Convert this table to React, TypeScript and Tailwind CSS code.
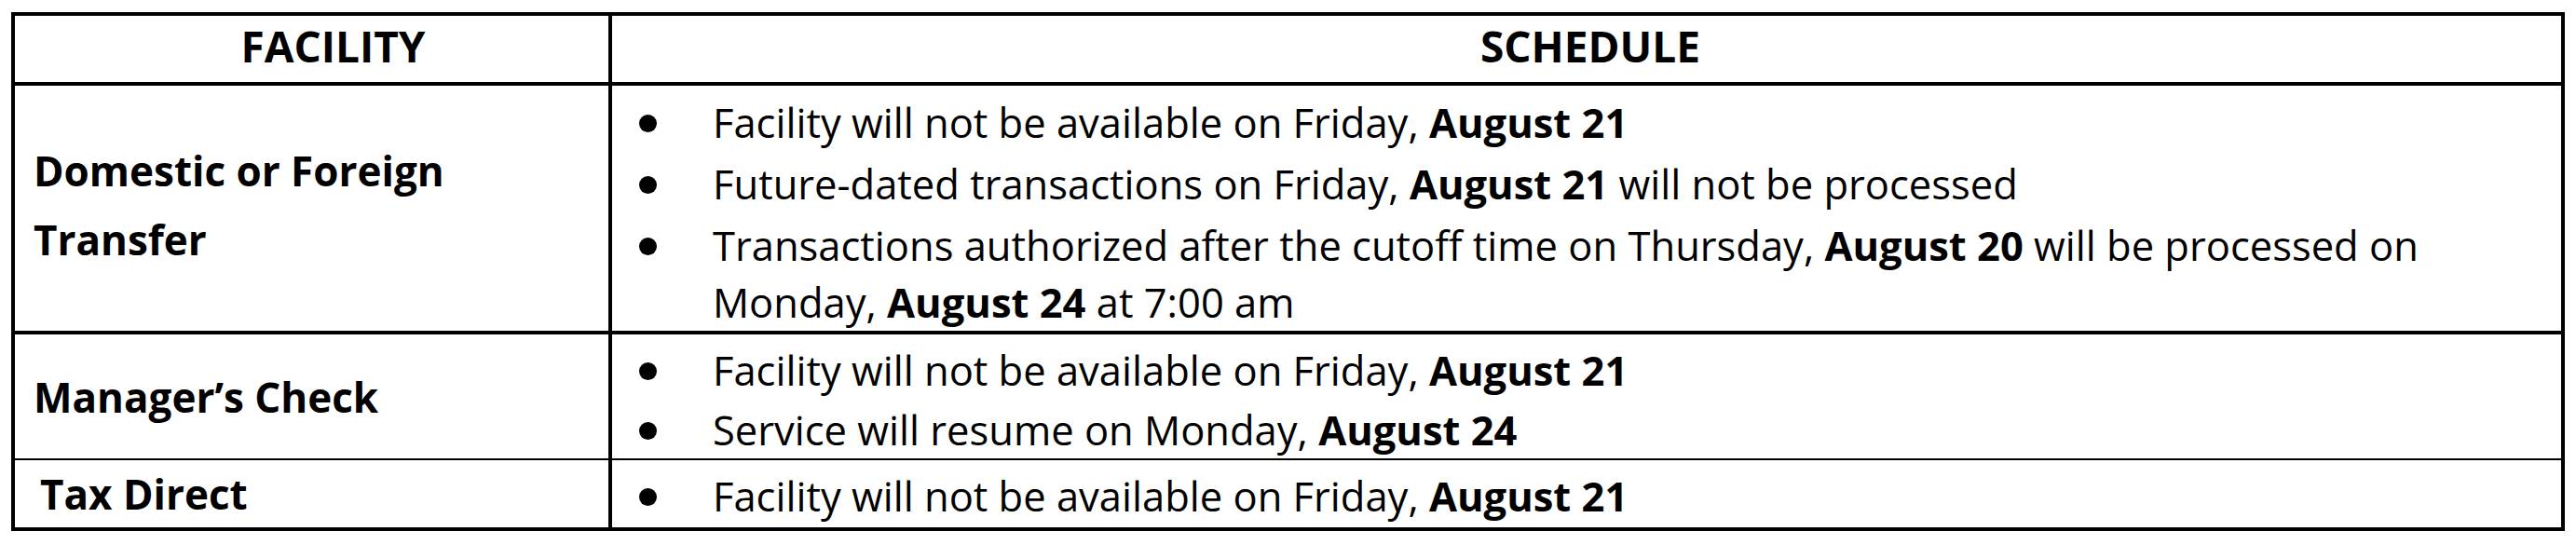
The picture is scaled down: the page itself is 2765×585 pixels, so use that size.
import React from "react";

type Seg = { t: string; b?: boolean };

function Item({ segs }: { segs: Seg[] }) {
  return (
    <li className="flex items-start">
      <div className="w-[108px] shrink-0 pl-[29px]">
        <div className="mt-[22px] h-[19px] w-[19px] rounded-full bg-black" />
      </div>
      <p className="flex-1 pr-[20px]">
        {segs.map((s, i) =>
          s.b ? (
            <b key={i} className="font-bold">
              {s.t}
            </b>
          ) : (
            <React.Fragment key={i}>{s.t}</React.Fragment>
          )
        )}
      </p>
    </li>
  );
}

export default function App() {
  return (
    <div className="min-h-[585px] w-[2765px] bg-white pt-[13px] pl-[12px] font-['Open_Sans',sans-serif] text-black">
      <div className="w-[2741px] border-[4px] border-black">
        {/* Header */}
        <div className="flex h-[75px] border-b-[4px] border-black text-[46px] font-bold">
          <div className="flex w-[641px] items-center justify-center border-r-[4px] border-black pb-[6px] pl-[46px]">
            FACILITY
          </div>
          <div className="flex flex-1 items-center justify-center pb-[6px] pl-[8px]">
            SCHEDULE
          </div>
        </div>

        {/* Row 1 */}
        <div className="flex border-b-[4px] border-black">
          <div className="flex w-[641px] items-center border-r-[4px] border-black pb-[8px] pl-[20px] text-[44px] font-bold leading-[74px]">
            <p>
              Domestic or Foreign
              <br />
              Transfer
            </p>
          </div>
          <ul className="flex flex-1 flex-col gap-[5px] pt-[9px] text-[43.5px] leading-[61px]">
            <Item
              segs={[
                { t: "Facility will not be available on Friday, " },
                { t: "August 21", b: true },
              ]}
            />
            <Item
              segs={[
                { t: "Future-dated transactions on Friday, " },
                { t: "August 21", b: true },
                { t: " will not be processed" },
              ]}
            />
            <Item
              segs={[
                { t: "Transactions authorized after the cutoff time on Thursday, " },
                { t: "August 20", b: true },
                { t: " will be processed on Monday, " },
                { t: "August 24", b: true },
                { t: " at 7:00 am" },
              ]}
            />
          </ul>
        </div>

        {/* Row 2 */}
        <div className="flex border-b-[2px] border-black">
          <div className="flex w-[641px] items-center border-r-[4px] border-black pl-[20px] text-[44px] font-bold">
            Manager’s Check
          </div>
          <ul className="flex flex-1 flex-col gap-[3px] pt-[8px] text-[43.5px] leading-[61px]">
            <Item
              segs={[
                { t: "Facility will not be available on Friday, " },
                { t: "August 21", b: true },
              ]}
            />
            <Item
              segs={[
                { t: "Service will resume on Monday, " },
                { t: "August 24", b: true },
              ]}
            />
          </ul>
        </div>

        {/* Row 3 */}
        <div className="flex">
          <div className="flex w-[641px] items-center border-r-[4px] border-black pl-[27px] text-[44px] font-bold">
            Tax Direct
          </div>
          <ul className="flex flex-1 flex-col pt-[8px] pb-[3px] text-[43.5px] leading-[61px]">
            <Item
              segs={[
                { t: "Facility will not be available on Friday, " },
                { t: "August 21", b: true },
              ]}
            />
          </ul>
        </div>
      </div>
    </div>
  );
}
